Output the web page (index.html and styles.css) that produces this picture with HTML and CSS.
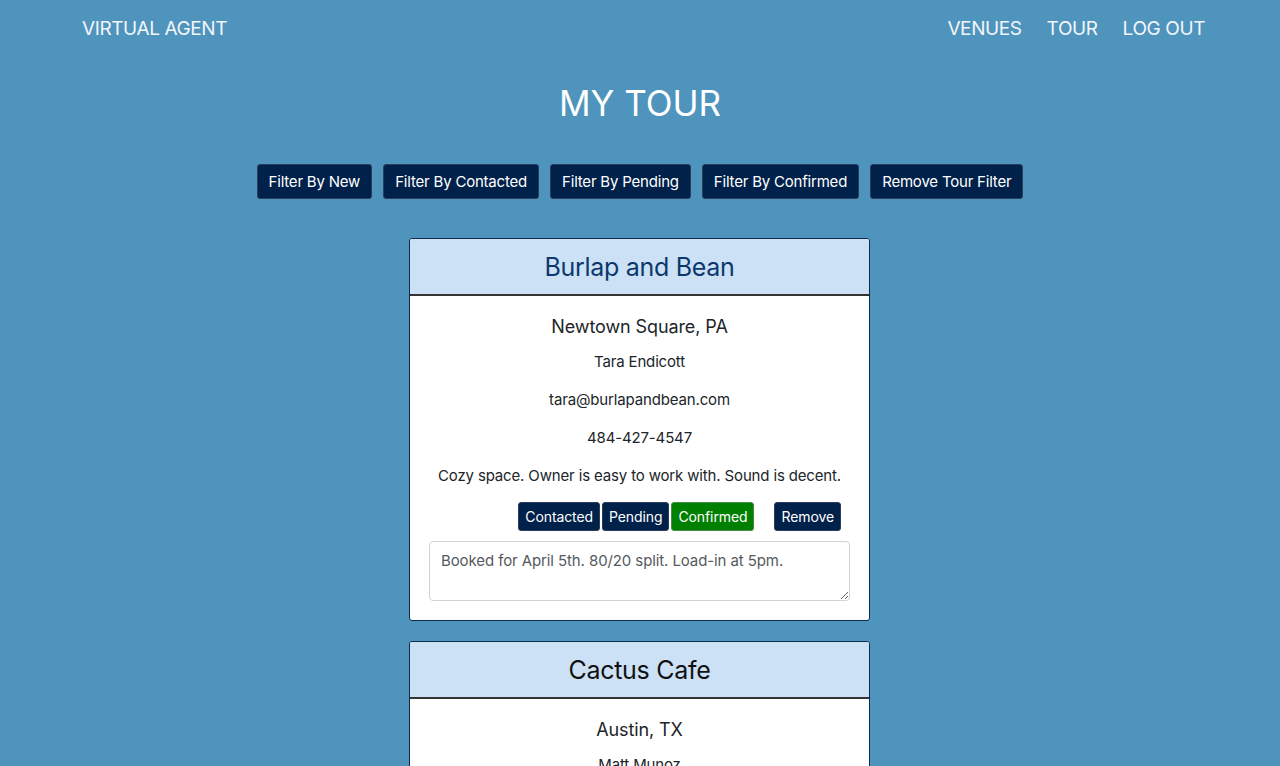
FILE: index.html
```html
<!DOCTYPE html>
<html lang="en">
<head>
<meta charset="utf-8">
<title>My Tour</title>
<link rel="stylesheet" href="styles.css">
</head>
<body>
<nav class="navbar">
  <a class="brand" href="#">VIRTUAL AGENT</a>
  <div class="nav-links">
    <a href="#">VENUES</a>
    <a href="#">TOUR</a>
    <a href="#">LOG OUT</a>
  </div>
</nav>
<main class="page">
  <h1 class="page-title">MY TOUR</h1>
  <div class="filters">
    <button class="btn btn-filter">Filter By New</button>
    <button class="btn btn-filter">Filter By Contacted</button>
    <button class="btn btn-filter">Filter By Pending</button>
    <button class="btn btn-filter">Filter By Confirmed</button>
    <button class="btn btn-filter">Remove Tour Filter</button>
  </div>
  <section class="cards">
    <article class="card">
      <header class="card-header"><h2 class="card-title active">Burlap and Bean</h2></header>
      <div class="card-body">
        <h3 class="city">Newtown Square, PA</h3>
        <p>Tara Endicott</p>
        <p>tara@burlapandbean.com</p>
        <p>484-427-4547</p>
        <p>Cozy space. Owner is easy to work with. Sound is decent.</p>
        <div class="status-row">
          <div class="status-group">
            <button class="btn btn-sm">Contacted</button>
            <button class="btn btn-sm">Pending</button>
            <button class="btn btn-sm btn-green">Confirmed</button>
          </div>
          <button class="btn btn-sm">Remove</button>
        </div>
        <textarea class="notes">Booked for April 5th. 80/20 split. Load-in at 5pm.</textarea>
      </div>
    </article>
    <article class="card">
      <header class="card-header"><h2 class="card-title">Cactus Cafe</h2></header>
      <div class="card-body">
        <h3 class="city">Austin, TX</h3>
        <p>Matt Munoz</p>
        <p>matt@cactuscafe.com</p>
        <p>512-475-6515</p>
      </div>
    </article>
  </section>
</main>
</body>
</html>
```
FILE: styles.css
```css
* { box-sizing: border-box; }
html, body { margin: 0; padding: 0; }
body {
  background: #4f94bd;
  font-family: Inter, "Noto Sans", "Liberation Sans", sans-serif;
  color: #212529;
  height: 766px;
  overflow: hidden;
}
.navbar {
  display: flex;
  justify-content: space-between;
  align-items: center;
  height: 56px;
  padding: 0 75px 0 82px;
}
.navbar a {
  color: #f2f6fa;
  text-decoration: none;
  font-size: 19px;
  letter-spacing: -0.4px;
}
.nav-links { display: flex; gap: 25px; }
.page { display: flex; flex-direction: column; align-items: center; }
.page-title {
  margin: 23px 0 0;
  font-size: 35px;
  font-weight: 400;
  color: #ffffff;
  line-height: 48px;
}
.filters {
  display: flex;
  gap: 11px;
  margin-top: 37px;
}
.btn {
  font-family: inherit;
  background: #00214a;
  color: #ffffff;
  border: 1px solid #2b3f5c;
  border-radius: 3px;
  cursor: pointer;
}
.btn-filter {
  height: 35px;
  padding: 0 11px;
  font-size: 15px;
  letter-spacing: -0.2px;
}
.cards {
  display: flex;
  flex-direction: column;
  gap: 20px;
  margin-top: 39px;
}
.card {
  width: 461px;
  margin-left: -1px;
  background: #ffffff;
  border: 1px solid #0e2a4d;
  border-radius: 3px;
  overflow: hidden;
}
.card-header {
  background: #cce1f5;
  border-bottom: 2px solid #333333;
  height: 57px;
  display: flex;
  align-items: center;
  justify-content: center;
}
.card-title {
  margin: 0;
  font-size: 25px;
  font-weight: 400;
  letter-spacing: -0.3px;
  color: #111111;
}
.card-title.active { color: #0b386c; }
.card-body {
  padding: 18px 19px 19px;
  text-align: center;
}
.city {
  margin: 0 0 10px;
  font-size: 18px;
  font-weight: 400;
  letter-spacing: -0.1px;
  line-height: 26px;
}
.card-body p {
  margin: 0 0 14px;
  font-size: 15px;
  letter-spacing: -0.15px;
  line-height: 24px;
  white-space: nowrap;
}
.status-row {
  display: flex;
  justify-content: flex-end;
  gap: 20px;
  padding-right: 9px;
}
.status-group { display: flex; gap: 2px; }
.btn-sm {
  height: 29px;
  padding: 0 6px;
  font-size: 14px;
  letter-spacing: -0.1px;
}
.btn-green { background: #008000; border-color: #4a8a4a; }
.notes {
  display: block;
  width: 100%;
  height: 60px;
  margin-top: 10px;
  border: 1px solid #cfd4da;
  border-radius: 4px;
  padding: 9px 11px;
  font-family: inherit;
  font-size: 15px;
  letter-spacing: -0.1px;
  color: #555a60;
  resize: vertical;
}
```
